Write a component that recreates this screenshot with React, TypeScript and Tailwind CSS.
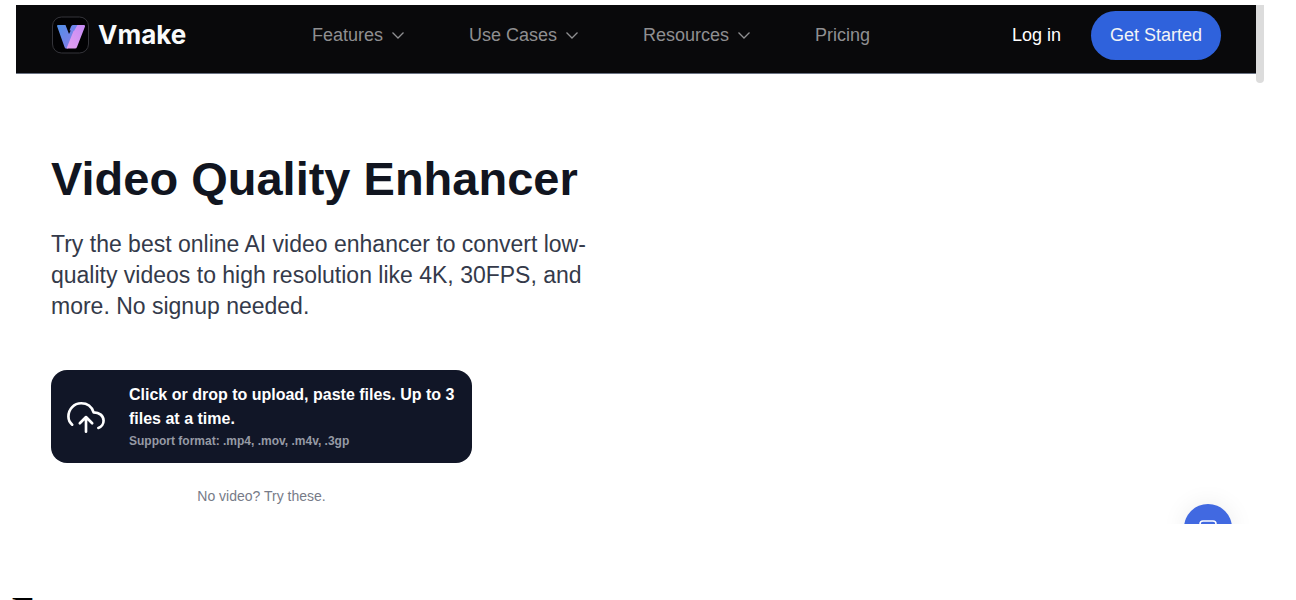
import { useId } from 'react';

const navItems = [
  { label: 'Features', hasMenu: true },
  { label: 'Use Cases', hasMenu: true },
  { label: 'Resources', hasMenu: true },
  { label: 'Pricing', hasMenu: false },
];

function Logo() {
  return (
    <a href="#" className="flex items-center gap-2">
      <svg width="39" height="38" viewBox="0 0 39 38" aria-hidden="true">
        <defs>
          <linearGradient id="logo-left" x1="0" y1="0" x2="1" y2="1">
            <stop offset="0" stopColor="#4f8fe8" />
            <stop offset="1" stopColor="#8b7be8" />
          </linearGradient>
          <linearGradient id="logo-right" x1="1" y1="0" x2="0" y2="1">
            <stop offset="0" stopColor="#c58af5" />
            <stop offset="1" stopColor="#e3a0f0" />
          </linearGradient>
        </defs>
        <rect x="1.500" y="1" width="36" height="36" rx="9" fill="#020204" stroke="#34343a" />
        <path d="M6.500 9h8l3.500 9 2-4h4l-7 18.500h-2q-1 0-1.500-1.500L6 10z" fill="url(#logo-left)" />
        <path d="M22 9h11q1.500 0 1 1.500L26 31q-.5 1.500-2 1.500h-8.500L22.500 15l-3-1z" fill="url(#logo-right)" />
        <path d="M22 9h4.500l-3.500 6-4.500-.5 1.500-4q.5-1.500 2-1.500z" fill="#6d83ec" />
      </svg>
      <span className="font-['Inter',sans-serif] text-[26px] leading-8 font-bold text-gray-50">Vmake</span>
    </a>
  );
}

function ChevronIcon() {
  return (
    <svg width="14" height="14" viewBox="0 0 14 14" fill="none" stroke="currentColor" aria-hidden="true">
      <path d="M1.500 4.500 7 10l5.500-5.500" strokeWidth="1.300" />
    </svg>
  );
}

function CloudUploadIcon() {
  return (
    <svg
      width="38"
      height="34"
      viewBox="0 0 40 34"
      fill="none"
      stroke="#fff"
      strokeWidth="2.800"
      strokeLinecap="round"
      strokeLinejoin="round"
      aria-hidden="true"
      className="shrink-0"
    >
      <path d="M5.500 24C2.500 21.500 1.500 18.500 1.500 15.500 1.500 7.500 7.500 1.500 15 1.500c6 0 11 3.500 13 9.500 6 0 10.500 3.500 10.500 9 0 3-2 6.500-5.500 7.500" />
      <path d="M20 31.500V16M13.500 22.500 20 16l6.500 6.500" />
    </svg>
  );
}

function Header() {
  return (
    <header className="flex h-[69px] items-center justify-between border-b border-gray-500 bg-[#09090b] px-[35px] pb-2 text-lg leading-6">
      <Logo />
      <nav className="flex items-center gap-16 pr-4 text-[#8f8f91]">
        {navItems.map((item) =>
          item.hasMenu ? (
            <button key={item.label} type="button" className="flex items-center gap-2">
              {item.label}
              <ChevronIcon />
            </button>
          ) : (
            <a key={item.label} href="#">
              {item.label}
            </a>
          ),
        )}
      </nav>
      <div className="flex items-center gap-[30px]">
        <a href="#" className="text-white">
          Log in
        </a>
        <button type="button" className="h-[49px] rounded-full bg-[#2f62dc] px-[19px] text-gray-100">
          Get Started
        </button>
      </div>
    </header>
  );
}

function UploadBox() {
  const inputId = useId();
  return (
    <label
      htmlFor={inputId}
      className="flex cursor-pointer items-center gap-6 rounded-2xl bg-[#111627] px-4 pt-[13px] pb-[11px] font-bold"
    >
      <CloudUploadIcon />
      <span>
        <span className="block text-base leading-6 text-white">
          Click or drop to upload, paste files. Up to 3 files at a time.
        </span>
        <span className="block text-xs leading-[21px] text-[#969aa5]">
          Support format: .mp4, .mov, .m4v, .3gp
        </span>
      </span>
      <input id={inputId} type="file" accept=".mp4,.mov,.m4v,.3gp" multiple className="sr-only" />
    </label>
  );
}

function ChatButton() {
  return (
    <button
      type="button"
      aria-label="Open chat"
      className="absolute right-6 -bottom-7 flex size-12 items-center justify-center rounded-full bg-[#4169e1] shadow-[0_0_24px_rgba(0,0,0,0.08)]"
    >
      <svg width="20" height="20" viewBox="0 0 20 20" fill="none" stroke="#fff" strokeWidth="1.500" aria-hidden="true">
        <path d="M5 3h10a3 3 0 0 1 3 3v8a3 3 0 0 1-3 3h-3l-2 2-2-2H5a3 3 0 0 1-3-3V6a3 3 0 0 1 3-3z" />
        <path d="M6 10h8" />
      </svg>
    </button>
  );
}

export default function App() {
  return (
    <div className="h-screen overflow-hidden bg-white font-['Liberation_Sans',Arial,sans-serif]">
      <div className="mt-[5px] mr-8 ml-4 flex">
        <div className="relative min-w-0 flex-1 overflow-hidden">
          <Header />
          <main className="max-w-[620px] px-[35px] pt-[79px] pb-[18px]">
            <h1 className="text-[47px] leading-[52px] font-bold whitespace-nowrap text-[#111520]">
              Video Quality Enhancer
            </h1>
            <p className="mt-6 text-[23px] leading-[31px] text-[#343a4a]">
              Try the best online AI video enhancer to convert low-quality videos to high resolution like 4K,
              30FPS, and more. No signup needed.
            </p>
            <div className="mt-12 max-w-[421px]">
              <UploadBox />
              <p className="mt-[23px] text-center text-sm leading-5 text-[#777b88]">No video? Try these.</p>
            </div>
          </main>
          <ChatButton />
        </div>
        <div className="h-[78px] w-2 rounded-b-full bg-[#dcdcdc]" />
      </div>
      <h2 className="mt-16 ml-3 font-['Liberation_Serif',serif] text-4xl leading-[44px] font-bold text-black">
        Features
      </h2>
    </div>
  );
}
